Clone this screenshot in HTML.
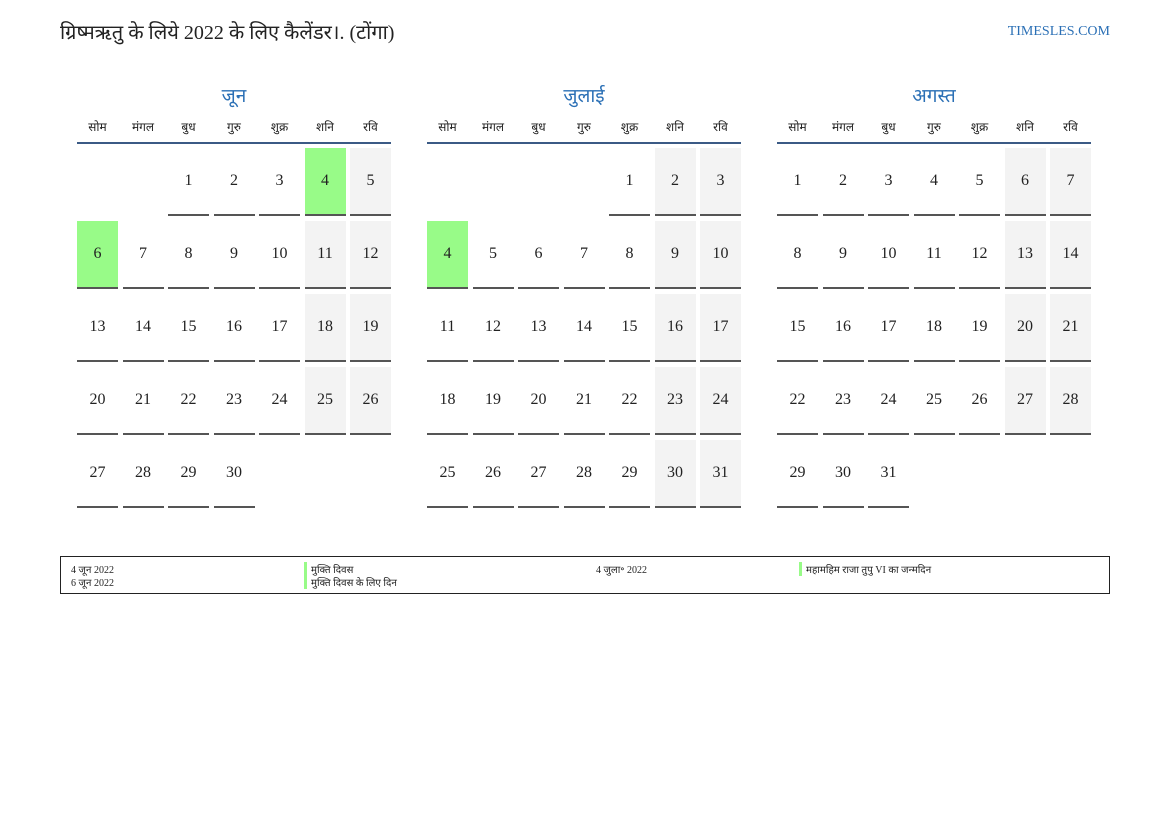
<!DOCTYPE html>
<html><head><meta charset="utf-8"><style>
body{margin:0;width:1169px;height:827px;background:#fff;font-family:"Liberation Serif","Noto Serif CJK SC",serif;position:relative;color:#222}
.title{position:absolute;left:60px;top:18px;font-size:20px;color:#222}
.site{position:absolute;right:59px;top:24px;font-size:14px;color:#2a6fb5}
.m{position:absolute;top:82px;width:314px}
.mt{text-align:center;font-size:19px;color:#2a6fb5;height:26px}
.wd{display:grid;grid-template-columns:repeat(7,41px);column-gap:4.5px;font-size:12px;text-align:center;height:36px;line-height:22px;padding-top:8px;box-sizing:border-box;border-bottom:2px solid #3b5a85}
.g{display:grid;grid-template-columns:repeat(7,41px);grid-auto-rows:68px;column-gap:4.5px;row-gap:5px;margin-top:4px}
.g div{display:flex;align-items:center;justify-content:center;font-size:16px;border-bottom:2px solid #555;box-sizing:border-box}
.g div.e{border:none}
.g div.w{background:#f3f3f3}
.g div.h{background:#98fb88}
.ft{position:absolute;left:60px;top:556px;width:1048px;height:36px;border:1px solid #222;font-size:10px}
.ft span{position:absolute}
.bar{border-left:3px solid #98fb88;padding-left:4px}
</style></head><body>
<div class="title">ग्रिष्मऋतु के लिये 2022 के लिए कैलेंडर।. (टोंगा)</div>
<div class="site">TIMESLES.COM</div>

<div class="m" style="left:77px"><div class="mt">जून</div>
<div class="wd"><span>सोम</span><span>मंगल</span><span>बुध</span><span>गुरु</span><span>शुक्र</span><span>शनि</span><span>रवि</span></div>
<div class="g">
<div class="e"></div><div class="e"></div><div>1</div><div>2</div><div>3</div><div class="h">4</div><div class="w">5</div>
<div class="h">6</div><div>7</div><div>8</div><div>9</div><div>10</div><div class="w">11</div><div class="w">12</div>
<div>13</div><div>14</div><div>15</div><div>16</div><div>17</div><div class="w">18</div><div class="w">19</div>
<div>20</div><div>21</div><div>22</div><div>23</div><div>24</div><div class="w">25</div><div class="w">26</div>
<div>27</div><div>28</div><div>29</div><div>30</div><div class="e"></div><div class="e"></div><div class="e"></div>
</div></div>

<div class="m" style="left:427px"><div class="mt">जुलाई</div>
<div class="wd"><span>सोम</span><span>मंगल</span><span>बुध</span><span>गुरु</span><span>शुक्र</span><span>शनि</span><span>रवि</span></div>
<div class="g">
<div class="e"></div><div class="e"></div><div class="e"></div><div class="e"></div><div>1</div><div class="w">2</div><div class="w">3</div>
<div class="h">4</div><div>5</div><div>6</div><div>7</div><div>8</div><div class="w">9</div><div class="w">10</div>
<div>11</div><div>12</div><div>13</div><div>14</div><div>15</div><div class="w">16</div><div class="w">17</div>
<div>18</div><div>19</div><div>20</div><div>21</div><div>22</div><div class="w">23</div><div class="w">24</div>
<div>25</div><div>26</div><div>27</div><div>28</div><div>29</div><div class="w">30</div><div class="w">31</div>
</div></div>

<div class="m" style="left:777px"><div class="mt">अगस्त</div>
<div class="wd"><span>सोम</span><span>मंगल</span><span>बुध</span><span>गुरु</span><span>शुक्र</span><span>शनि</span><span>रवि</span></div>
<div class="g">
<div>1</div><div>2</div><div>3</div><div>4</div><div>5</div><div class="w">6</div><div class="w">7</div>
<div>8</div><div>9</div><div>10</div><div>11</div><div>12</div><div class="w">13</div><div class="w">14</div>
<div>15</div><div>16</div><div>17</div><div>18</div><div>19</div><div class="w">20</div><div class="w">21</div>
<div>22</div><div>23</div><div>24</div><div>25</div><div>26</div><div class="w">27</div><div class="w">28</div>
<div>29</div><div>30</div><div>31</div><div class="e"></div><div class="e"></div><div class="e"></div><div class="e"></div>
</div></div>

<div class="ft">
<span style="left:10px;top:5px">4 जून 2022</span>
<span style="left:10px;top:18px">6 जून 2022</span>
<span class="bar" style="left:243px;top:5px">मुक्ति दिवस</span>
<span class="bar" style="left:243px;top:18px">मुक्ति दिवस के लिए दिन</span>
<span style="left:535px;top:5px">4 जुला॰ 2022</span>
<span class="bar" style="left:738px;top:5px">महामहिम राजा तुपु VI का जन्मदिन</span>
</div>
</body></html>
